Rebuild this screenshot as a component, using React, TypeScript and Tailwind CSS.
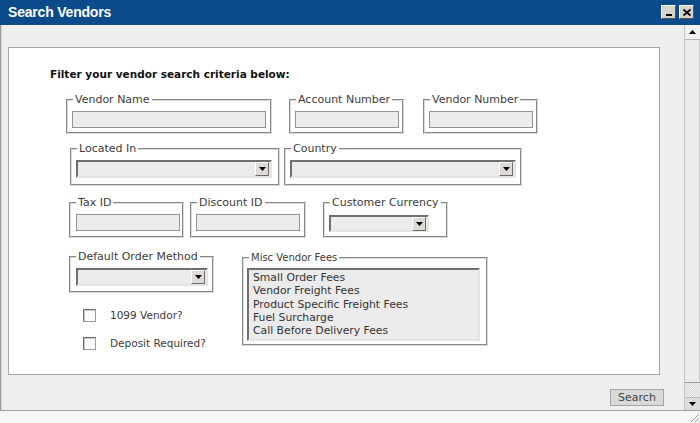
import React from "react";

const FS =
  "min-w-0 m-0 p-0 border-2 [border-style:groove] border-[#dadada]";
const LEG = "ml-[5px] px-[2px] leading-[12px] text-[#3c3c3c]";
const INPUT = "h-[17px] border border-[#949494] bg-[#ececec]";
const SUNKEN =
  "border-2 border-t-[#6f6f6f] border-l-[#6f6f6f] border-r-[#e4e4e4] border-b-[#e4e4e4] bg-[#ebebeb]";

function DropBtn() {
  return (
    <div className="ml-auto mr-[1px] w-[14px] h-[14px] bg-[#dedbd6] border border-t-[#ffffff] border-l-[#ffffff] border-r-[#6a6a6a] border-b-[#6a6a6a] flex items-center justify-center">
      <svg width="7" height="4" viewBox="0 0 7 4">
        <path d="M0 0h7L3.5 4z" fill="#000" />
      </svg>
    </div>
  );
}

function Select({ className }: { className: string }) {
  return (
    <div className={`flex items-center ${SUNKEN} ${className}`}>
      <DropBtn />
    </div>
  );
}

function Checkbox({ label, className }: { label: string; className: string }) {
  return (
    <div className={`flex items-center ml-[14px] ${className}`}>
      <div className="w-[13px] h-[13px] bg-[#fbfbfb] border border-t-[#6c6c6c] border-l-[#6c6c6c] border-r-[#9a9a9a] border-b-[#9a9a9a] shadow-[inset_1px_1px_0_#c8c8c8]" />
      <span className="ml-[14px] text-[10.5px] leading-[13px] text-[#3c3c3c]">
        {label}
      </span>
    </div>
  );
}

export default function App() {
  return (
    <div className="w-[700px] h-[423px] overflow-hidden flex flex-col bg-[#efefef] font-['DejaVu_Sans',Verdana,sans-serif]">
      {/* title bar */}
      <div className="h-[25px] shrink-0 flex items-start bg-[#0b4a8b] pl-[8px] pr-[6px]">
        <span className="font-['Liberation_Sans',Arial,sans-serif] text-[14px] font-bold text-white tracking-[-0.2px] leading-[25px]">
          Search Vendors
        </span>
        <div className="ml-auto mt-[5px] flex gap-[3px]">
          <div className="w-[15px] h-[14px] bg-[#d6d3ce] border border-t-white border-l-white border-r-[#555] border-b-[#555] flex items-end justify-center pb-[2px]">
            <div className="w-[6px] h-[2px] bg-black" />
          </div>
          <div className="w-[15px] h-[14px] bg-[#d6d3ce] border border-t-white border-l-white border-r-[#555] border-b-[#555] flex items-center justify-center">
            <svg width="8" height="7" viewBox="0 0 8 7">
              <path d="M0.5 0.5L7.5 6.5M7.5 0.5L0.5 6.5" stroke="#000" strokeWidth="1.8" />
            </svg>
          </div>
        </div>
      </div>

      {/* middle */}
      <div className="flex h-[385px] shrink-0">
        <div className="w-[1px] bg-[#9a9a9a]" />
        <div className="w-[1px] bg-[#d4d4d4]" />
        <div className="flex-1 flex flex-col pt-[22px] pl-[6px]">
          <div className="h-[328px] w-[652px] border border-[#a6a6a6] bg-white flex flex-col">
            <div className="mt-[20px] ml-[41px] text-[10.5px] leading-[13px] font-bold text-[#111]">
              Filter your vendor search criteria below:
            </div>

            {/* row 1 */}
            <div className="flex items-start mt-[13px] ml-[57px]">
              <fieldset className={`${FS} w-[206px] pb-[4px]`}>
                <legend className={`${LEG} text-[11px]`}>Vendor Name</legend>
                <div className={`${INPUT} mt-[5px] ml-[4px] w-[194px]`} />
              </fieldset>
              <fieldset className={`${FS} ml-[17px] w-[115px] pb-[4px]`}>
                <legend className={`${LEG} text-[11px]`}>Account Number</legend>
                <div className={`${INPUT} mt-[5px] ml-[4px] w-[104px]`} />
              </fieldset>
              <fieldset className={`${FS} ml-[19px] w-[115px] pb-[4px]`}>
                <legend className={`${LEG} text-[11px]`}>Vendor Number</legend>
                <div className={`${INPUT} mt-[5px] ml-[4px] w-[104px]`} />
              </fieldset>
            </div>

            {/* row 2 */}
            <div className="flex items-start mt-[9px] ml-[61px]">
              <fieldset className={`${FS} w-[210px] pb-[6px]`}>
                <legend className={`${LEG} text-[11px]`}>Located In</legend>
                <Select className="mt-[5px] ml-[4px] w-[196px] h-[18px]" />
              </fieldset>
              <fieldset className={`${FS} ml-[4px] w-[238px] pb-[6px]`}>
                <legend className={`${LEG} text-[11px]`}>Country</legend>
                <Select className="mt-[5px] ml-[4px] w-[226px] h-[18px]" />
              </fieldset>
            </div>

            {/* row 3 */}
            <div className="flex items-start mt-[11px] ml-[60px]">
              <fieldset className={`${FS} w-[115px] pb-[5px]`}>
                <legend className={`${LEG} text-[11px]`}>Tax ID</legend>
                <div className={`${INPUT} mt-[5px] ml-[5px] w-[104px]`} />
              </fieldset>
              <fieldset className={`${FS} ml-[6px] w-[116px] pb-[5px]`}>
                <legend className={`${LEG} text-[11px]`}>Discount ID</legend>
                <div className={`${INPUT} mt-[5px] ml-[4px] w-[104px]`} />
              </fieldset>
              <fieldset className={`${FS} ml-[17px] w-[125px] pb-[4px]`}>
                <legend className={`${LEG} text-[11px]`}>Customer Currency</legend>
                <Select className="mt-[6px] ml-[4px] w-[100px] h-[17px]" />
              </fieldset>
            </div>

            {/* row 4 */}
            <div className="flex items-start mt-[13px] ml-[60px]">
              <div className="flex flex-col">
                <fieldset className={`${FS} w-[145px] pb-[5px]`}>
                  <legend className={`${LEG} text-[11px]`}>Default Order Method</legend>
                  <Select className="mt-[5px] ml-[5px] w-[132px] h-[18px]" />
                </fieldset>
                <Checkbox label="1099 Vendor?" className="mt-[16px]" />
                <Checkbox label="Deposit Required?" className="mt-[15px]" />
              </div>
              <fieldset className={`${FS} ml-[28px] mt-[1px] w-[246px] pb-[3px]`}>
                <legend className={`${LEG} text-[10px]`}>Misc Vendor Fees</legend>
                <div className={`${SUNKEN} mt-[4px] ml-[3px] w-[233px] h-[73px] pl-[4px] pt-[1px] text-[10.8px] leading-[13.3px] text-[#333]`}>
                  <div>Small Order Fees</div>
                  <div>Vendor Freight Fees</div>
                  <div>Product Specific Freight Fees</div>
                  <div>Fuel Surcharge</div>
                  <div>Call Before Delivery Fees</div>
                </div>
              </fieldset>
            </div>
          </div>

          <div className="flex justify-end pr-[20px] mt-[14px]">
            <div className="w-[54px] h-[17px] bg-[#d9d9d9] border border-[#a4a4a4] flex items-center justify-center text-[11px] leading-[15px] text-[#444]">
              Search
            </div>
          </div>
        </div>

        {/* scrollbar */}
        <div className="w-[16px] flex flex-col border-l border-[#c4c4c4] bg-[#e6e6e6]">
          <div className="h-[14px] flex items-center justify-center bg-[#f2f2f2]">
            <svg width="7" height="4" viewBox="0 0 7 4">
              <path d="M0 4h7L3.5 0z" fill="#000" />
            </svg>
          </div>
          <div className="h-[1px] bg-[#b4b4b4]" />
          <div className="h-[342px] bg-[#ececec] border-r border-[#c8c8c8]" />
          <div className="h-[1px] bg-[#9c9c9c]" />
          <div className="h-[14px] bg-[repeating-conic-gradient(#d6d6d6_0_25%,#f4f4f4_0_50%)] bg-[length:2px_2px]" />
          <div className="h-[13px] flex items-center justify-center bg-[#dcdcdc] border-t border-[#bdbdbd]">
            <svg width="7" height="4" viewBox="0 0 7 4">
              <path d="M0 0h7L3.5 4z" fill="#000" />
            </svg>
          </div>
        </div>
      </div>

      <div className="h-[1px] shrink-0 bg-[#a0a0a0]" />
      <div className="flex-1 bg-[#f6f6f6] flex justify-end items-end">
        <svg width="12" height="12" viewBox="0 0 12 12">
          <path d="M11 3L3 11M11 7L7 11M11 10L10 11" stroke="#a0a0a0" strokeWidth="1" />
        </svg>
      </div>
    </div>
  );
}
